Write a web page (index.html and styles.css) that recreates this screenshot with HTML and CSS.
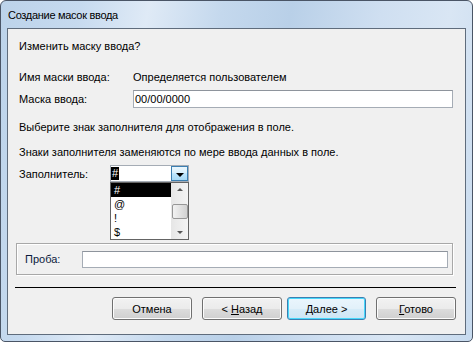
FILE: index.html
```html
<!DOCTYPE html>
<html lang="ru">
<head>
    <meta charset="UTF-8">
    <title>Создание масок ввода</title>
    <link rel="stylesheet" href="styles.css">
</head>
<body>
    <div class="window">
        <div class="titlebar">Создание масок ввода</div>
        <div class="client">
            <div class="page">
                <p class="question">Изменить маску ввода?</p>

                <div class="field name-row">
                    <span class="label">Имя маски ввода:</span>
                    <span>Определяется пользователем</span>
                </div>

                <div class="field mask-row">
                    <span class="label">Маска ввода:</span>
                    <div class="textbox mask">00/00/0000</div>
                </div>

                <p class="hint first">Выберите знак заполнителя для отображения в поле.</p>
                <p class="hint">Знаки заполнителя заменяются по мере ввода данных в поле.</p>

                <div class="field filler-row">
                    <span class="label short">Заполнитель:</span>
                    <div class="combo">
                        <div class="combo-value"><span class="selected-text">#</span></div>
                        <div class="combo-button"><span class="arrow-down"></span></div>

                        <div class="dropdown">
                            <ul class="options">
                                <li class="active">#</li>
                                <li>@</li>
                                <li>!</li>
                                <li>$</li>
                            </ul>
                            <div class="scrollbar">
                                <span class="scroll-up"></span>
                                <span class="thumb"></span>
                                <span class="scroll-down"></span>
                            </div>
                        </div>
                    </div>
                </div>

                <div class="trial">
                    <span class="trial-label">Проба:</span>
                    <div class="textbox trial-input"></div>
                </div>
            </div>

            <div class="separator"></div>

            <div class="buttons">
                <button class="btn cancel">Отмена</button>
                <button class="btn back">&lt; <u>Н</u>азад</button>
                <button class="btn next default"><u>Д</u>алее &gt;</button>
                <button class="btn finish"><u>Г</u>отово</button>
            </div>
        </div>
    </div>
</body>
</html>
```

FILE: styles.css
```css
* {
    margin: 0;
    padding: 0;
    box-sizing: border-box;
}

body {
    width: 473px;
    height: 342px;
    background: #ffffff;
    font-family: 'Liberation Sans', Arial, sans-serif;
    font-size: 11px;
    color: #000;
}

.window {
    width: 473px;
    height: 342px;
    display: flex;
    flex-direction: column;
    border: 1px solid #4a5566;
    border-radius: 6px 6px 5px 5px;
    background: linear-gradient(100deg, #bcd3ea 0%, #c6daef 15%, #dfeaf6 28%, #c4d8ed 42%, #b9d0e8 55%, #cfdff1 72%, #d9e6f4 85%, #c7daee 100%);
    overflow: hidden;
}

.titlebar {
    height: 27px;
    padding: 7px 0 0 7px;
    font-family: 'Liberation Sans', Arial, sans-serif;
    font-size: 11px;
    letter-spacing: -0.3px;
    line-height: 15px;
    color: #000;
}

.client {
    flex: 1;
    margin: 0 6px 6px 6px;
    border: 1px solid #5f6c7c;
    background: #f0f0f0;
    display: flex;
    flex-direction: column;
}

.page {
    padding: 10px 0 0 11px;
}

.question,
.hint {
    line-height: 14px;
}

.field {
    display: flex;
    align-items: center;
}

.label {
    width: 114px;
    flex-shrink: 0;
}

.label.short {
    width: 91px;
}

.name-row {
    margin-top: 17px;
    height: 14px;
}

.mask-row {
    margin-top: 6px;
    height: 18px;
}

.textbox {
    background: #fff;
    border: 1px solid #a5acb5;
    border-top-color: #8e949c;
    height: 18px;
    line-height: 16px;
    padding-left: 1px;
}

.mask {
    width: 320px;
}

.hint.first {
    margin-top: 12px;
}

.hint {
    margin-top: 11px;
}

.filler-row {
    margin-top: 6px;
    height: 17px;
}

.combo {
    position: relative;
    width: 79px;
    height: 17px;
    background: #fff;
    border: 1px solid #a5acb5;
    display: flex;
}

.combo-value {
    flex: 1;
    padding: 1px 0 0 0;
}

.selected-text {
    display: inline-block;
    background: #000;
    color: #fff;
    width: 8px;
    height: 13px;
    line-height: 13px;
    text-align: center;
}

.combo-button {
    width: 17px;
    height: 15px;
    border: 1px solid #3c7fb1;
    background: linear-gradient(#eaf6fd 0%, #d9f0fc 45%, #bee6fd 50%, #a7d9f5 100%);
    display: flex;
    align-items: center;
    justify-content: center;
}

.arrow-down {
    width: 0;
    height: 0;
    border-left: 4px solid transparent;
    border-right: 4px solid transparent;
    border-top: 4px solid #000;
    margin-top: 2px;
}

/* open list of the combo, drawn over the page */
.dropdown {
    position: absolute;
    top: 16px;
    left: -1px;
    width: 79px;
    height: 58px;
    background: #fff;
    border: 1px solid #646464;
    display: flex;
}

.options {
    list-style: none;
    flex: 1;
    padding-top: 0;
}

.options li {
    height: 14px;
    line-height: 14px;
    padding-left: 3px;
    color: #000;
}

.options li.active {
    background: #000;
    color: #fff;
}

.scrollbar {
    width: 17px;
    background: linear-gradient(90deg, #e6e6e6, #f4f4f4);
    display: flex;
    flex-direction: column;
    align-items: center;
    justify-content: space-between;
    padding: 5px 0 5px 0;
}

.scroll-up {
    width: 0;
    height: 0;
    border-left: 3px solid transparent;
    border-right: 3px solid transparent;
    border-bottom: 3px solid #555;
}

.scroll-down {
    width: 0;
    height: 0;
    border-left: 3px solid transparent;
    border-right: 3px solid transparent;
    border-top: 3px solid #555;
}

.thumb {
    width: 16px;
    height: 15px;
    border: 1px solid #979797;
    border-radius: 2px;
    background: linear-gradient(90deg, #f2f2f2, #e2e2e2 50%, #d2d2d2);
}

.trial {
    margin: 61px 0 0 -3px;
    width: 437px;
    height: 32px;
    border: 1px solid #a8a8a8;
    box-shadow: inset 1px 1px 0 #fff, 1px 1px 0 #fff;
    display: flex;
    align-items: center;
    padding: 0 4px 0 8px;
}

.trial-label {
    width: 57px;
    color: #0b1a3c;
}

.trial-input {
    width: 366px;
    height: 17px;
}

.separator {
    margin: 12px 9px 0 7px;
    height: 1px;
    background: #000;
}

.buttons {
    display: flex;
    justify-content: flex-end;
    padding: 9px 9px 0 0;
}

.btn {
    width: 80px;
    height: 23px;
    font-family: 'Liberation Sans', Arial, sans-serif;
    font-size: 11px;
    color: #000;
    border: 1px solid #707070;
    border-radius: 3px;
    background: linear-gradient(#f2f2f2 0%, #ebebeb 50%, #dddddd 51%, #cfcfcf 100%);
    box-shadow: inset 0 0 0 1px #fcfcfc;
}

.btn u {
    text-decoration: underline;
}

.cancel {
    margin-right: 10px;
}

.back {
    margin-right: 5px;
}

.next {
    width: 79px;
    margin-right: 10px;
}

.btn.default {
    border-color: #3c7fb1;
    box-shadow: inset 0 0 0 1px #48d8fb;
    background: linear-gradient(#eaf6fd 0%, #e2f1fa 50%, #d7ecf8 51%, #cde6f5 100%);
}
```
